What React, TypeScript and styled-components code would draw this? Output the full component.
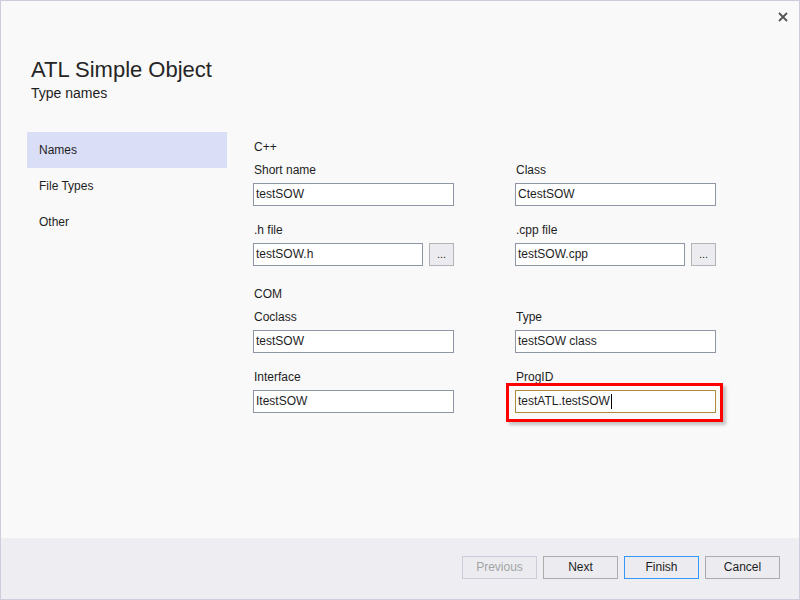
import styled, { createGlobalStyle } from "styled-components";

const GlobalStyle = createGlobalStyle`
  html, body {
    margin: 0;
    padding: 0;
    background: #f9f9f9;
  }
  body {
    font-family: "Liberation Sans", Arial, sans-serif;
    color: #1e1e1e;
  }
`;

const Window = styled.div`
  width: 800px;
  height: 600px;
  box-sizing: border-box;
  border: 1px solid #cccedb;
  background: #f9f9f9;
  display: flex;
  flex-direction: column;
  position: relative;
`;

const CloseButton = styled.div`
  position: absolute;
  top: 10px;
  right: 10px;
  width: 12px;
  height: 12px;
  display: flex;
  align-items: center;
  justify-content: center;
`;

const Body = styled.div`
  flex: 1;
  display: flex;
  flex-direction: column;
  padding: 55px 0 0 26px;
`;

const Title = styled.div`
  font-size: 22px;
  line-height: 28px;
  padding-left: 4px;
  color: #252525;
`;

const Subtitle = styled.div`
  font-size: 14px;
  line-height: 18px;
  padding-left: 4px;
`;

const Main = styled.div`
  display: flex;
  margin-top: 30px;
  gap: 26px;
`;

const Nav = styled.div`
  width: 200px;
  display: flex;
  flex-direction: column;
`;

const NavItem = styled.div<{ $active?: boolean }>`
  height: 36px;
  line-height: 36px;
  padding-left: 12px;
  font-size: 12px;
  background: ${(p) => (p.$active ? "#dadff7" : "transparent")};
`;

const Form = styled.div`
  padding-top: 7px;
  display: flex;
  flex-direction: column;
`;

const SectionTitle = styled.div`
  font-size: 12px;
  line-height: 16px;
  padding-left: 1px;
  margin-bottom: 7px;
`;

const Grid = styled.div`
  display: grid;
  grid-template-columns: 201px 201px;
  column-gap: 61px;
  row-gap: 16px;
  margin-bottom: 20px;
`;

const Field = styled.div`
  display: flex;
  flex-direction: column;
  gap: 5px;
`;

const Label = styled.div`
  font-size: 12px;
  line-height: 16px;
  padding-left: 1px;
`;

const InputRow = styled.div`
  display: flex;
  gap: 6px;
`;

const TextBox = styled.div<{ $accent?: boolean }>`
  position: relative;
  flex: 1;
  height: 23px;
  box-sizing: border-box;
  border: 1px solid ${(p) => (p.$accent ? "#b08a3c" : "#8e95a5")};
  background: #ffffff;
  font-size: 12px;
  line-height: 21px;
  padding-left: 2px;
  display: flex;
  align-items: center;
  white-space: nowrap;
`;

const Highlight = styled.div`
  position: absolute;
  top: -8px;
  left: -10px;
  right: -8px;
  bottom: -10px;
  border: 3px solid #ff0000;
  box-shadow: 3px 3px 3px rgba(0, 0, 0, 0.22);
  pointer-events: none;
`;

const Caret = styled.span`
  display: inline-block;
  width: 1px;
  height: 15px;
  background: #000000;
  margin-left: 1px;
`;

const BrowseButton = styled.div`
  width: 25px;
  height: 23px;
  box-sizing: border-box;
  border: 1px solid #b4b4b8;
  background: #ececf0;
  font-size: 11px;
  line-height: 21px;
  text-align: center;
`;

const Footer = styled.div`
  height: 61px;
  background: #eeeef2;
  display: flex;
  justify-content: flex-end;
  align-items: flex-start;
  gap: 6px;
  padding: 18px 19px 0 0;
  box-sizing: border-box;
`;

const Button = styled.div<{ $variant?: "default" | "disabled" | "focused" }>`
  width: 75px;
  height: 23px;
  box-sizing: border-box;
  border: 1px solid
    ${(p) =>
      p.$variant === "disabled"
        ? "#ccccdb"
        : p.$variant === "focused"
        ? "#3399ff"
        : "#acacac"};
  background: #ececf0;
  color: ${(p) => (p.$variant === "disabled" ? "#a2a4a5" : "#1e1e1e")};
  font-size: 12px;
  line-height: 21px;
  text-align: center;
`;

type FieldProps = {
  label: string;
  value: string;
  browse?: boolean;
};

function FormField({ label, value, browse }: FieldProps) {
  return (
    <Field>
      <Label>{label}</Label>
      <InputRow>
        <TextBox>{value}</TextBox>
        {browse && <BrowseButton>...</BrowseButton>}
      </InputRow>
    </Field>
  );
}

export default function App() {
  return (
    <>
      <GlobalStyle />
      <Window>
        <CloseButton>
          <svg width="10" height="10" viewBox="0 0 10 10">
            <path
              d="M1 1 L9 9 M9 1 L1 9"
              stroke="#555555"
              strokeWidth="1.8"
              fill="none"
            />
          </svg>
        </CloseButton>
        <Body>
          <Title>ATL Simple Object</Title>
          <Subtitle>Type names</Subtitle>
          <Main>
            <Nav>
              <NavItem $active>Names</NavItem>
              <NavItem>File Types</NavItem>
              <NavItem>Other</NavItem>
            </Nav>
            <Form>
              <SectionTitle>C++</SectionTitle>
              <Grid>
                <FormField label="Short name" value="testSOW" />
                <FormField label="Class" value="CtestSOW" />
                <FormField label=".h file" value="testSOW.h" browse />
                <FormField label=".cpp file" value="testSOW.cpp" browse />
              </Grid>
              <SectionTitle>COM</SectionTitle>
              <Grid>
                <FormField label="Coclass" value="testSOW" />
                <FormField label="Type" value="testSOW class" />
                <FormField label="Interface" value="ItestSOW" />
                <Field>
                  <Label>ProgID</Label>
                  <InputRow>
                    <TextBox $accent>
                      testATL.testSOW
                      <Caret />
                      <Highlight />
                    </TextBox>
                  </InputRow>
                </Field>
              </Grid>
            </Form>
          </Main>
        </Body>
        <Footer>
          <Button $variant="disabled">Previous</Button>
          <Button>Next</Button>
          <Button $variant="focused">Finish</Button>
          <Button>Cancel</Button>
        </Footer>
      </Window>
    </>
  );
}
